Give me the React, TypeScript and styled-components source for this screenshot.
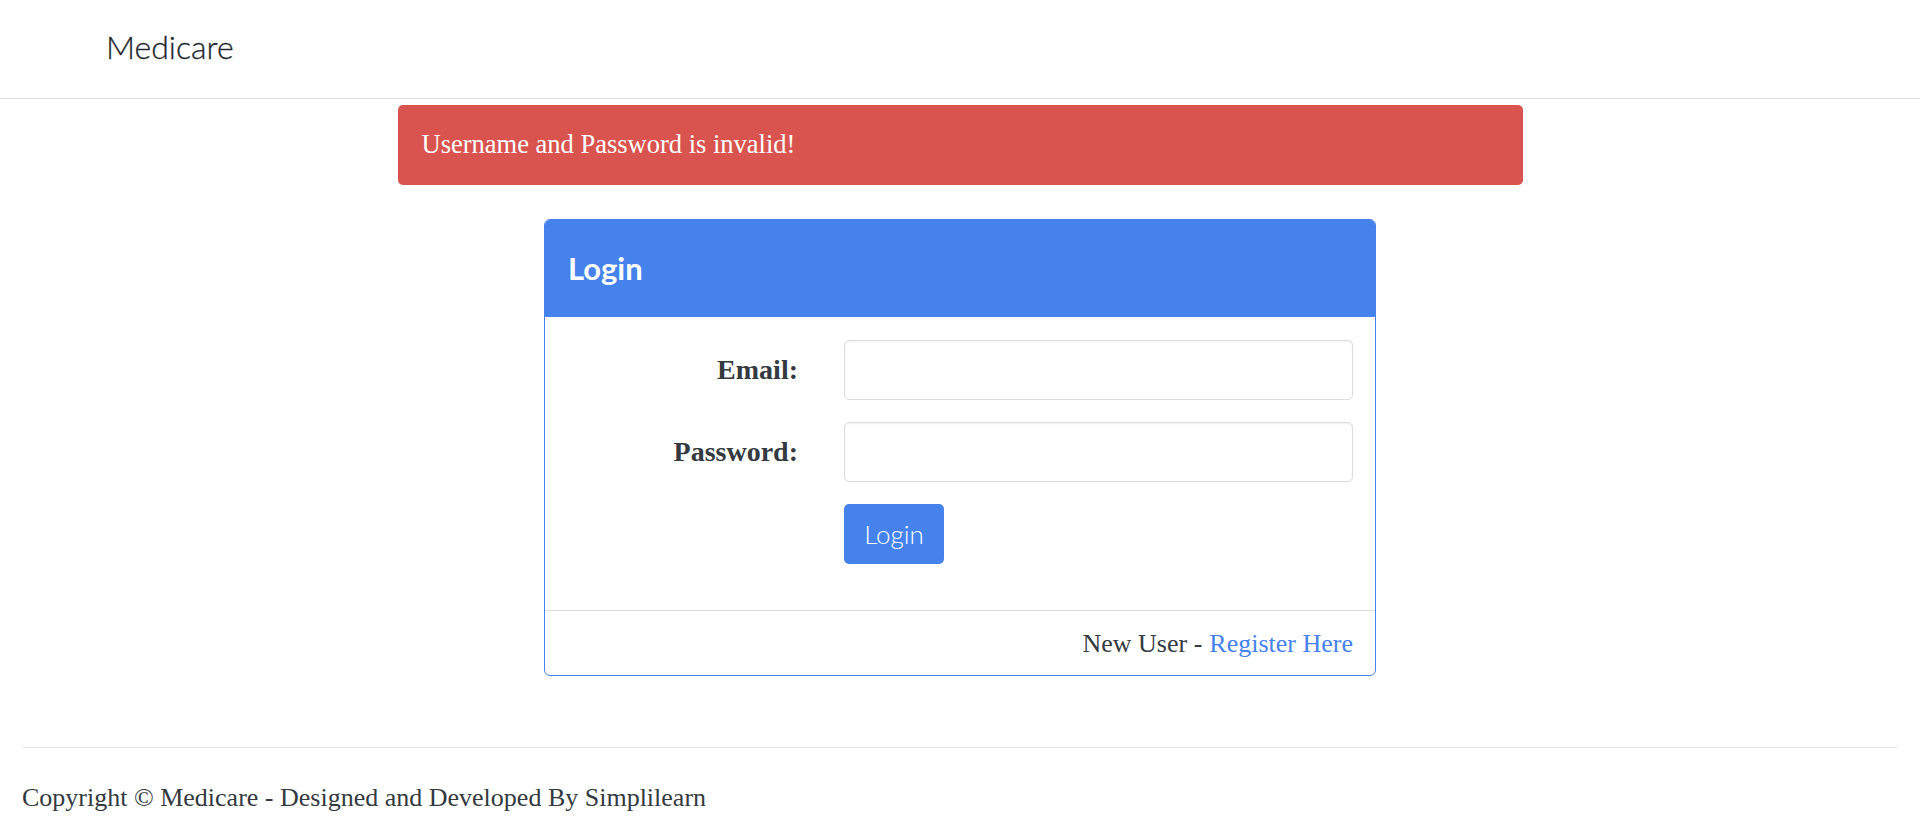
import React from 'react';
import styled, { createGlobalStyle } from 'styled-components';

const GlobalStyle = createGlobalStyle`
  html, body {
    margin: 0;
    padding: 0;
    background: #ffffff;
  }
  body {
    font-family: "Liberation Serif", Georgia, serif;
    font-size: 26px;
    line-height: 1.5;
    color: #343a40;
  }
  * {
    box-sizing: border-box;
  }
`;

const Navbar = styled.nav`
  display: flex;
  align-items: center;
  height: 99px;
  padding: 0 106px;
  border-bottom: 1px solid #dfdfdf;
`;

const Brand = styled.a`
  font-family: Lato, "Open Sans", sans-serif;
  font-size: 32px;
  font-weight: 300;
  color: #24282d;
  text-decoration: none;
  margin-top: -5px;
  -webkit-text-stroke: 0.3px #24282d;
`;

const Main = styled.main`
  display: flex;
  flex-direction: column;
  align-items: center;
`;

const Alert = styled.div`
  width: 1125px;
  height: 80px;
  margin-top: 6px;
  padding: 0 24px;
  display: flex;
  align-items: center;
  background: #d9534f;
  color: #ffffff;
  font-size: 26.5px;
  border-radius: 5px;
`;

const Card = styled.section`
  width: 832px;
  margin-top: 34px;
  border: 1px solid #4582ec;
  border-radius: 6px;
  overflow: hidden;
`;

const CardHeader = styled.header`
  height: 97px;
  padding: 0 23px;
  display: flex;
  align-items: center;
  background: #4582ec;
  color: #ffffff;
  font-family: Lato, "Open Sans", sans-serif;
  font-size: 31px;
  font-weight: 700;
`;

const CardBody = styled.form`
  padding: 23px 22px 24px 23px;
`;

const FormRow = styled.div`
  display: grid;
  grid-template-columns: 230px 1fr;
  column-gap: 46px;
  align-items: center;
  margin-bottom: 22px;
`;

const Label = styled.label`
  text-align: right;
  font-size: 28px;
  font-weight: 700;
  color: #343a40;
`;

const Input = styled.input`
  height: 60px;
  width: 100%;
  border: 1px solid #dcdcdc;
  border-radius: 5px;
  box-shadow: inset 0 1px 2px rgba(0, 0, 0, 0.06);
  padding: 0 16px;
  font-size: 24px;
  outline: none;
`;

const SubmitButton = styled.button`
  grid-column: 2;
  width: 100px;
  height: 60px;
  border: none;
  border-radius: 5px;
  background: #4582ec;
  color: #ffffff;
  font-family: Lato, "Open Sans", sans-serif;
  font-size: 26px;
  font-weight: 300;
  cursor: pointer;
`;

const CardFooter = styled.footer`
  height: 65px;
  padding: 0 22px;
  display: flex;
  align-items: center;
  justify-content: flex-end;
  border-top: 1px solid #dddddd;
`;

const Link = styled.a`
  color: #4582ec;
  text-decoration: none;
  margin-left: 7px;
`;

const PageFooter = styled.footer`
  margin-top: 71px;
  padding: 0 22px 30px;
`;

const Rule = styled.hr`
  margin: 0;
  border: none;
  border-top: 1px solid #e9e9e9;
`;

const Copyright = styled.p`
  margin: 30px 0 0;
`;

export default function App() {
  return (
    <>
      <GlobalStyle />
      <Navbar>
        <Brand href="#">Medicare</Brand>
      </Navbar>
      <Main>
        <Alert>Username and Password is invalid!</Alert>
        <Card>
          <CardHeader>Login</CardHeader>
          <CardBody onSubmit={(e) => e.preventDefault()}>
            <FormRow>
              <Label htmlFor="email">Email:</Label>
              <Input id="email" type="email" />
            </FormRow>
            <FormRow>
              <Label htmlFor="password">Password:</Label>
              <Input id="password" type="password" />
            </FormRow>
            <FormRow>
              <SubmitButton type="submit">Login</SubmitButton>
            </FormRow>
          </CardBody>
          <CardFooter>
            New User -<Link href="#">Register Here</Link>
          </CardFooter>
        </Card>
      </Main>
      <PageFooter>
        <Rule />
        <Copyright>Copyright © Medicare - Designed and Developed By Simplilearn</Copyright>
      </PageFooter>
    </>
  );
}
